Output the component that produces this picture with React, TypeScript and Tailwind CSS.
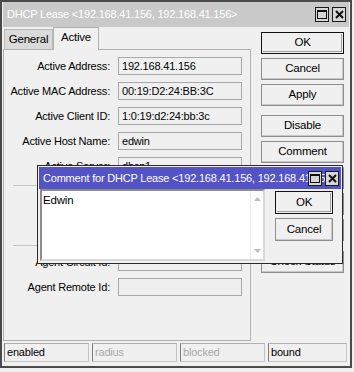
import React from 'react';

const font = "font-['Liberation_Sans',Arial,sans-serif] tracking-[-0.2px]";

const TitleButtons: React.FC = () => (
  <div className="flex gap-[3px]">
    <div className="w-[14px] h-[15px] border border-[#1a1a1a] bg-[#d6d6d6] flex items-center justify-center">
      <svg width="10" height="9" viewBox="0 0 10 9">
        <rect x="0.5" y="0.5" width="9" height="8" fill="none" stroke="#111" strokeWidth="1" />
        <rect x="0" y="0" width="10" height="2" fill="#111" />
      </svg>
    </div>
    <div className="w-[14px] h-[15px] border border-[#1a1a1a] bg-[#d6d6d6] flex items-center justify-center">
      <svg width="9" height="9" viewBox="0 0 9 9">
        <path d="M1 1 L8 8 M8 1 L1 8" stroke="#111" strokeWidth="2" />
      </svg>
    </div>
  </div>
);

const Btn: React.FC<{ label: string; def?: boolean; className?: string }> = ({ label, def, className }) => (
  <div
    className={`h-[22px] flex items-center justify-center bg-[#f0f0f0] text-[11.5px] text-black border ${
      def ? 'border-[#111] shadow-[inset_0_0_0_1px_#f0f0f0,inset_-1px_-1px_0_1px_#a0a0a0]' : 'border-[#8e8e8e] shadow-[inset_-1px_-1px_0_#c8c8c8]'
    } ${className ?? ''}`}
  >
    {label}
  </div>
);

const Field: React.FC<{ label: string; value?: string }> = ({ label, value }) => (
  <div className="flex items-center h-[18px]">
    <div className="w-[106px] text-right text-[11px] text-black whitespace-nowrap">{label}</div>
    <div className="ml-[8px] w-[124px] h-[18px] border border-[#a8a8a8] bg-[#f0f0f0] flex items-center pl-[3px] text-[11px] text-black">
      {value}
    </div>
  </div>
);

const Status: React.FC<{ text: string; dim?: boolean; w: string }> = ({ text, dim, w }) => (
  <div
    className={`${w} h-[19px] border border-[#c4c4c4] border-l-[#7c7c7c] border-t-[#b0b0b0] flex items-center pl-[2px] text-[11px] ${
      dim ? 'text-[#a8a8a8]' : 'text-black'
    }`}
  >
    {text}
  </div>
);

export default function App() {
  return (
    <div className={`relative w-[354px] h-[372px] overflow-hidden bg-[#f0f0f0] ${font}`}>
      {/* main window */}
      <div className="w-[352px] h-[368px] border-2 border-[#4a4a4a] bg-[#f0f0f0] flex flex-col">
        <div className="h-[25px] mx-px flex items-center justify-between bg-[#c9c9c9] pl-[4px] pr-[3px]">
          <span className="text-[11px] text-white whitespace-nowrap">DHCP Lease &lt;192.168.41.156, 192.168.41.156&gt;</span>
          <TitleButtons />
        </div>

        <div className="flex h-[314px]">
          {/* left: tabs + panel */}
          <div className="ml-px w-[248px] flex flex-col">
            <div className="h-[22px] flex items-end pl-px">
              <div className="h-[20px] w-[49px] bg-[#dadada] border border-b-0 border-[#b8b8b8] flex items-center justify-center text-[11.5px] text-black">
                General
              </div>
              <div className="relative z-10 -mb-px h-[23px] w-[46px] bg-[#f0f0f0] border border-b-0 border-[#b0b0b0] flex items-center justify-center text-[11.5px] text-black pb-[3px]">
                Active
              </div>
            </div>
            <div className="flex-1 border border-[#b0b0b0] pt-[7px] flex flex-col">
              <div className="flex flex-col gap-[7px]">
                <Field label="Active Address:" value="192.168.41.156" />
                <Field label="Active MAC Address:" value="00:19:D2:24:BB:3C" />
                <Field label="Active Client ID:" value="1:0:19:d2:24:bb:3c" />
                <Field label="Active Host Name:" value="edwin" />
                <Field label="Active Server:" value="dhcp1" />
              </div>
              <div className="ml-[9px] mt-[10px] w-[233px] h-px bg-[#c4c4c4]" />
              <div className="flex flex-col gap-[7px] mt-[7px]">
                <Field label="Expires After:" value="" />
                <Field label="Last Seen:" value="" />
              </div>
              <div className="ml-[9px] mt-[9px] w-[233px] h-px bg-[#c4c4c4]" />
              <div className="flex flex-col gap-[7px] mt-[7px]">
                <Field label="Agent Circuit Id:" />
                <Field label="Agent Remote Id:" />
              </div>
            </div>
          </div>

          {/* right: buttons */}
          <div className="ml-[10px] w-[83px] pt-[5px] flex flex-col">
            <Btn label="OK" def />
            <Btn label="Cancel" className="mt-[4px]" />
            <Btn label="Apply" className="mt-[4px]" />
            <Btn label="Disable" className="mt-[9px]" />
            <Btn label="Comment" className="mt-[4px]" />
            <Btn label="Copy" className="mt-[4px]" />
            <Btn label="Remove" className="mt-[4px]" />
            <Btn label="Make Static" className="mt-[4px]" />
            <Btn label="Check Status" className="mt-[10px]" />
          </div>
        </div>

        <div className="mt-[2px] ml-[2px] flex gap-[3px]">
          <Status text="enabled" w="w-[85px]" />
          <Status text="radius" dim w="w-[85px]" />
          <Status text="blocked" dim w="w-[85px]" />
          <Status text="bound" w="w-[79px]" />
        </div>
      </div>

      {/* comment dialog */}
      <div className="absolute left-[37px] top-[165px] w-[306px] h-[99px] border border-[#2a2a2a] bg-[#f0f0f0] p-px flex flex-col">
        <div className="relative h-[22px] bg-[#5353c6] overflow-hidden flex items-center pl-[4px]">
          <span className="text-[11px] text-white whitespace-nowrap">
            Comment for DHCP Lease &lt;192.168.41.156, 192.168.41.156&gt;
          </span>
          <div className="absolute right-[2px] top-[4px]">
            <TitleButtons />
          </div>
        </div>
        <div className="flex flex-1">
          <div className="ml-px w-[225px] h-[72px] bg-white border-2 border-[#8c8c8c] border-b-[#d8d8d8] border-r-[#d8d8d8] flex">
            <div className="flex-1 pl-[1px] pt-[1px] text-[11.5px] text-black">Edwin</div>
            <div className="w-[13px] border-l border-[#ececec] flex flex-col items-center justify-between py-[6px]">
              <svg width="7" height="4" viewBox="0 0 7 4"><path d="M0 4 L3.5 0 L7 4 Z" fill="#bdbdbd" /></svg>
              <svg width="7" height="4" viewBox="0 0 7 4"><path d="M0 0 L3.5 4 L7 0 Z" fill="#bdbdbd" /></svg>
            </div>
          </div>
          <div className="ml-[10px] mt-[2px] w-[58px] flex flex-col">
            <Btn label="OK" def className="h-[23px]" />
            <Btn label="Cancel" className="mt-[4px] h-[23px]" />
          </div>
        </div>
      </div>
    </div>
  );
}
